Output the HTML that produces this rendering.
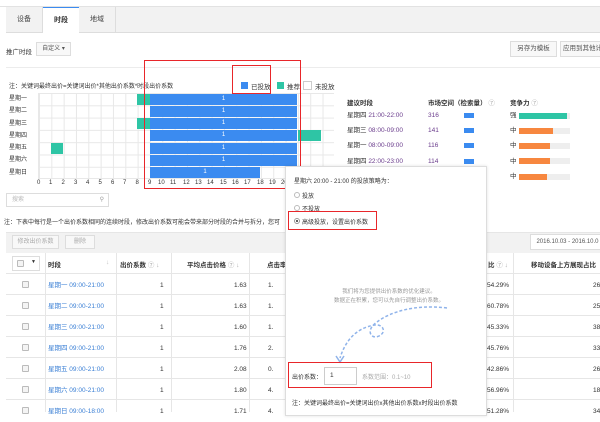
<!DOCTYPE html>
<html><head><meta charset="utf-8"><style>
*{margin:0;padding:0;box-sizing:border-box}
body{width:600px;height:412px;overflow:hidden;background:#fff;position:relative;font-family:"Liberation Sans","Noto Sans CJK SC",sans-serif;font-size:6.5px;color:#333}
.a{position:absolute;white-space:nowrap}
.grid{position:absolute;left:38px;top:93px;width:296px;height:86px;border-left:1px solid #e8e8e8;
background-image:linear-gradient(to right,#e8e8e8 1px,transparent 1px),linear-gradient(to bottom,#e8e8e8 1px,transparent 1px);
background-size:12.33px 12.3px;border-bottom:1px solid #e8e8e8}
.bl{position:absolute;background:#3b8bf0;color:#fff;text-align:center;font-size:6px;line-height:11px;height:11px}
.tl{position:absolute;background:#2ec5a5;height:11px}
.btn{position:absolute;border:1px solid #ddd;background:#f8f8f8;text-align:center;color:#555}
.red{position:absolute;border:1.5px solid #e8262a}
.row{position:absolute;left:6px;width:594px;height:21px;border-bottom:1px solid #e6e6e6}
.cb{position:absolute;width:7px;height:7px;border:1px solid #bbb;border-radius:1px;background:#f4f4f4}
.vl{position:absolute;top:253px;height:159px;border-left:1px solid #e6e6e6}
.lk{color:#3a7fd5}
</style></head><body>
<div class="a" style="left:0;top:6px;width:600px;height:1px;background:#e2e2e2"></div>
<div class="a" style="left:6px;top:7px;width:594px;height:26px;background:#f2f2f2;border-bottom:1px solid #ddd"></div>
<div class="a" style="left:6px;top:7px;width:37px;height:26px;border-right:1px solid #ddd;line-height:26px;text-align:center;font-size:7px;color:#444">设备</div>
<div class="a" style="left:43px;top:7px;width:36px;height:27px;background:#fff;border-top:1.5px solid #3b8bf0;line-height:25px;text-align:center;font-size:7px;font-weight:bold">时段</div>
<div class="a" style="left:79px;top:7px;width:37px;height:26px;border-right:1px solid #ddd;line-height:26px;text-align:center;font-size:7px;color:#444">地域</div>
<div class="a" style="left:6px;top:46px">推广时段</div>
<div class="btn" style="left:36px;top:42px;width:35px;height:14px;line-height:12px;font-size:6px">自定义 ▾</div>
<div class="btn" style="left:510px;top:41px;width:47px;height:16px;line-height:14px">另存为模板</div>
<div class="btn" style="left:560px;top:41px;width:45px;height:16px;line-height:14px">应用到其他计</div>
<div class="a" style="left:6px;top:67px;width:594px;height:1px;background:#ececec"></div>
<div class="a" style="left:9px;top:81px;font-size:6px">注：关键词最终出价=关键词出价*其他出价系数*时段出价系数</div>
<div class="a" style="left:241px;top:82px;width:7px;height:7px;background:#3b8bf0"></div><div class="a" style="left:251px;top:81px">已投放</div>
<div class="a" style="left:277px;top:82px;width:7px;height:7px;background:#2ec5a5"></div><div class="a" style="left:287px;top:81px">推荐</div>
<div class="a" style="left:303px;top:81px;width:9px;height:9px;border:1px solid #ccc"></div><div class="a" style="left:315px;top:81px">未投放</div>
<div class="a" style="left:9px;top:93px;line-height:12.3px;font-size:6px">星期一<br>星期二<br>星期三<br>星期四<br>星期五<br>星期六<br>星期日</div>
<div class="grid"></div>
<div class="tl" style="left:137px;top:94px;width:13px"></div>
<div class="tl" style="left:137px;top:118px;width:13px"></div>
<div class="tl" style="left:298px;top:130px;width:23px"></div>
<div class="tl" style="left:51px;top:143px;width:12px"></div>
<div class="bl" style="left:150px;top:94px;width:147px">1</div>
<div class="bl" style="left:150px;top:106px;width:147px">1</div>
<div class="bl" style="left:150px;top:118px;width:147px">1</div>
<div class="bl" style="left:150px;top:130px;width:147px">1</div>
<div class="bl" style="left:150px;top:143px;width:147px">1</div>
<div class="bl" style="left:150px;top:155px;width:147px">1</div>
<div class="bl" style="left:150px;top:167px;width:110px">1</div>
<div class="a" style="left:37px;top:180px;font-size:6px;word-spacing:0">
<span style="position:absolute;left:0">0</span><span style="position:absolute;left:12px">1</span><span style="position:absolute;left:24.5px">2</span><span style="position:absolute;left:37px">3</span><span style="position:absolute;left:49px">4</span><span style="position:absolute;left:61.5px">5</span><span style="position:absolute;left:74px">6</span><span style="position:absolute;left:86px">7</span><span style="position:absolute;left:98.5px">8</span><span style="position:absolute;left:111px">9</span><span style="position:absolute;left:121px">10</span><span style="position:absolute;left:133px">11</span><span style="position:absolute;left:146px">12</span><span style="position:absolute;left:158px">13</span><span style="position:absolute;left:170px">14</span><span style="position:absolute;left:183px">15</span><span style="position:absolute;left:195px">16</span><span style="position:absolute;left:207px">17</span><span style="position:absolute;left:220px">18</span><span style="position:absolute;left:232px">19</span><span style="position:absolute;left:244px">20</span></div>
<div class="red" style="left:144px;top:60px;width:157px;height:129px"></div>
<div class="red" style="left:232px;top:65px;width:39px;height:29px"></div>
<div class="a" style="left:347px;top:97px;font-weight:bold">建议时段</div>
<div class="a" style="left:428px;top:97px;font-weight:bold">市场空间（检索量） <span style="color:#aaa;font-weight:normal">⑦</span></div>
<div class="a" style="left:510px;top:97px;font-weight:bold">竞争力 <span style="color:#aaa;font-weight:normal">⑦</span></div>
<div class="a" style="left:347px;top:108px;line-height:15.2px">星期四 <span style="color:#6a3c8c">21:00-22:00</span><br>星期三 <span style="color:#6a3c8c">08:00-09:00</span><br>星期一 <span style="color:#6a3c8c">08:00-09:00</span><br>星期四 <span style="color:#6a3c8c">22:00-23:00</span></div>
<div class="a" style="left:428px;top:108px;line-height:15.2px;color:#6a3c8c">316<br>141<br>116<br>114</div>
<div class="a" style="left:464px;top:113px;width:10px;height:5px;background:#3b8bf0"></div>
<div class="a" style="left:464px;top:128px;width:10px;height:5px;background:#3b8bf0"></div>
<div class="a" style="left:464px;top:143px;width:10px;height:5px;background:#3b8bf0"></div>
<div class="a" style="left:464px;top:159px;width:10px;height:5px;background:#3b8bf0"></div>
<div class="a" style="left:510px;top:108px;line-height:15.2px">强<br>中<br>中<br>中<br>中</div>
<div class="a" style="left:519px;top:113px;width:51px;height:6px;background:#eee"><div style="width:48px;height:6px;background:#2ec5a5"></div></div>
<div class="a" style="left:519px;top:128px;width:51px;height:6px;background:#eee"><div style="width:34px;height:6px;background:#f7873f"></div></div>
<div class="a" style="left:519px;top:143px;width:51px;height:6px;background:#eee"><div style="width:31px;height:6px;background:#f7873f"></div></div>
<div class="a" style="left:519px;top:158px;width:51px;height:6px;background:#eee"><div style="width:31px;height:6px;background:#f7873f"></div></div>
<div class="a" style="left:519px;top:174px;width:51px;height:6px;background:#eee"><div style="width:28px;height:6px;background:#f7873f"></div></div>
<div class="a" style="left:6px;top:193px;width:103px;height:14px;border:1px solid #ddd;color:#bbb;padding-left:5px;line-height:12px;font-size:6px">搜索<span style="position:absolute;right:4px;color:#999">⚲</span></div>
<div class="a" style="left:4px;top:217px;font-size:6px">注：下表中每行是一个出价系数相同的连续时段，修改出价系数可能会带来部分时段的合并与拆分，您可</div>
<div class="a" style="left:6px;top:232px;width:594px;height:21px;background:#f2f2f2;border-top:1px solid #e6e6e6"></div>
<div class="btn" style="left:12px;top:235px;width:47px;height:14px;line-height:12px;color:#aaa;font-size:6px">修改出价系数</div>
<div class="btn" style="left:65px;top:235px;width:30px;height:14px;line-height:12px;color:#aaa;font-size:6px">删除</div>
<div class="btn" style="left:530px;top:234px;width:75px;height:16px;line-height:14px;background:#fff;font-size:6px">2016.10.03 - 2016.10.0</div>
<div class="row" style="top:253px;background:#fff"></div>
<div class="row" style="top:274px"></div><div class="row" style="top:295px"></div><div class="row" style="top:316px"></div><div class="row" style="top:337px"></div><div class="row" style="top:358px"></div><div class="row" style="top:379px"></div>
<div class="vl" style="left:45px"></div><div class="vl" style="left:116px"></div><div class="vl" style="left:171px"></div><div class="vl" style="left:249px"></div><div class="vl" style="left:513px"></div>
<div class="a" style="left:12px;top:256px;width:28px;height:15px;border:1px solid #ddd;background:#fff"></div>
<div class="cb" style="left:17px;top:260px"></div><div class="a" style="left:31px;top:259px;font-size:5px">▼</div>
<div class="a" style="left:48px;top:259px;font-weight:bold">时段</div><div class="a" style="left:106px;top:259px;color:#bbb">↓</div>
<div class="a" style="left:120px;top:259px;font-weight:bold">出价系数 <span style="color:#aaa;font-weight:normal">⑦ ↓</span></div>
<div class="a" style="left:187px;top:259px;font-weight:bold">平均点击价格 <span style="color:#aaa;font-weight:normal">⑦ ↓</span></div>
<div class="a" style="left:267px;top:259px;font-weight:bold">点击率</div>
<div class="a" style="left:488px;top:259px;font-weight:bold">比 <span style="color:#aaa;font-weight:normal">⑦ ↓</span></div>
<div class="a" style="left:531px;top:259px;font-weight:bold">移动设备上方展现占比</div>
<div class="a" style="left:48px;top:275px;line-height:21px"><span class="lk">星期一 09:00-21:00<br>星期二 09:00-21:00<br>星期三 09:00-21:00<br>星期四 09:00-21:00<br>星期五 09:00-21:00<br>星期六 09:00-21:00<br>星期日 09:00-18:00</span></div>
<div class="a" style="left:160px;top:275px;line-height:21px">1<br>1<br>1<br>1<br>1<br>1<br>1</div>
<div class="a" style="left:234px;top:275px;line-height:21px;text-align:right">1.63<br>1.63<br>1.60<br>1.76<br>2.08<br>1.80<br>1.71</div>
<div class="a" style="left:268px;top:275px;line-height:21px">1.<br>1.<br>1.<br>2.<br>0.<br>4.<br>4.</div>
<div class="a" style="left:487px;top:275px;line-height:21px">54.29%<br>60.78%<br>45.33%<br>45.76%<br>42.86%<br>56.96%<br>51.28%</div>
<div class="a" style="left:593px;top:275px;line-height:21px">26<br>25<br>38<br>33<br>26<br>18<br>34</div>
<div class="cb" style="left:22px;top:281px"></div><div class="cb" style="left:22px;top:302px"></div><div class="cb" style="left:22px;top:323px"></div><div class="cb" style="left:22px;top:344px"></div><div class="cb" style="left:22px;top:365px"></div><div class="cb" style="left:22px;top:386px"></div><div class="cb" style="left:22px;top:407px"></div>
<div class="a" style="left:285px;top:166px;width:202px;height:250px;background:#fff;border:1px solid #ddd;box-shadow:0 0 3px rgba(0,0,0,.12)"></div>
<div class="a" style="left:294px;top:176px;font-size:6px">星期六 20:00 - 21:00 的投放策略为：</div>
<div class="a" style="left:294px;top:192px;width:6px;height:6px;border:1px solid #bbb;border-radius:50%"></div><div class="a" style="left:302px;top:191px;font-size:6px">投放</div>
<div class="a" style="left:294px;top:205px;width:6px;height:6px;border:1px solid #bbb;border-radius:50%"></div><div class="a" style="left:302px;top:204px;font-size:6px">不投放</div>
<div class="a" style="left:294px;top:218px;width:6px;height:6px;border:1px solid #999;border-radius:50%;background:radial-gradient(#555 35%,#fff 45%)"></div><div class="a" style="left:302px;top:217px;font-size:6px">高级投放，设置出价系数</div>
<div class="red" style="left:288px;top:211px;width:89px;height:19px"></div>
<div class="a" style="left:334px;top:288px;font-size:5.5px;color:#999;text-align:center;line-height:9px">我们将为您提供出价系数的优化建议。<br>数据正在积累，您可以先自行调整出价系数。</div>
<svg class="a" style="left:335px;top:300px" width="115" height="65"><path d="M112 8 C80 4 55 12 42 22 C30 30 36 40 44 36 C52 32 48 24 40 25 C20 28 10 42 5 58" fill="none" stroke="#8fb3ea" stroke-width="1.5" stroke-dasharray="3 2"/><path d="M1 56 L5 62 L9 56" fill="none" stroke="#8fb3ea" stroke-width="1.5"/></svg>
<div class="a" style="left:292px;top:372px;font-size:6px">出价系数：</div>
<div class="a" style="left:324px;top:367px;width:33px;height:18px;border:1px solid #ccc;padding-left:5px;line-height:16px;font-size:6.5px">1</div>
<div class="a" style="left:362px;top:372px;font-size:6px;color:#aaa">系数范围：0.1~10</div>
<div class="red" style="left:288px;top:362px;width:144px;height:26px"></div>
<div class="a" style="left:292px;top:398px;font-size:6px">注：关键词最终出价=关键词出价x其他出价系数x时段出价系数</div>
</body></html>
